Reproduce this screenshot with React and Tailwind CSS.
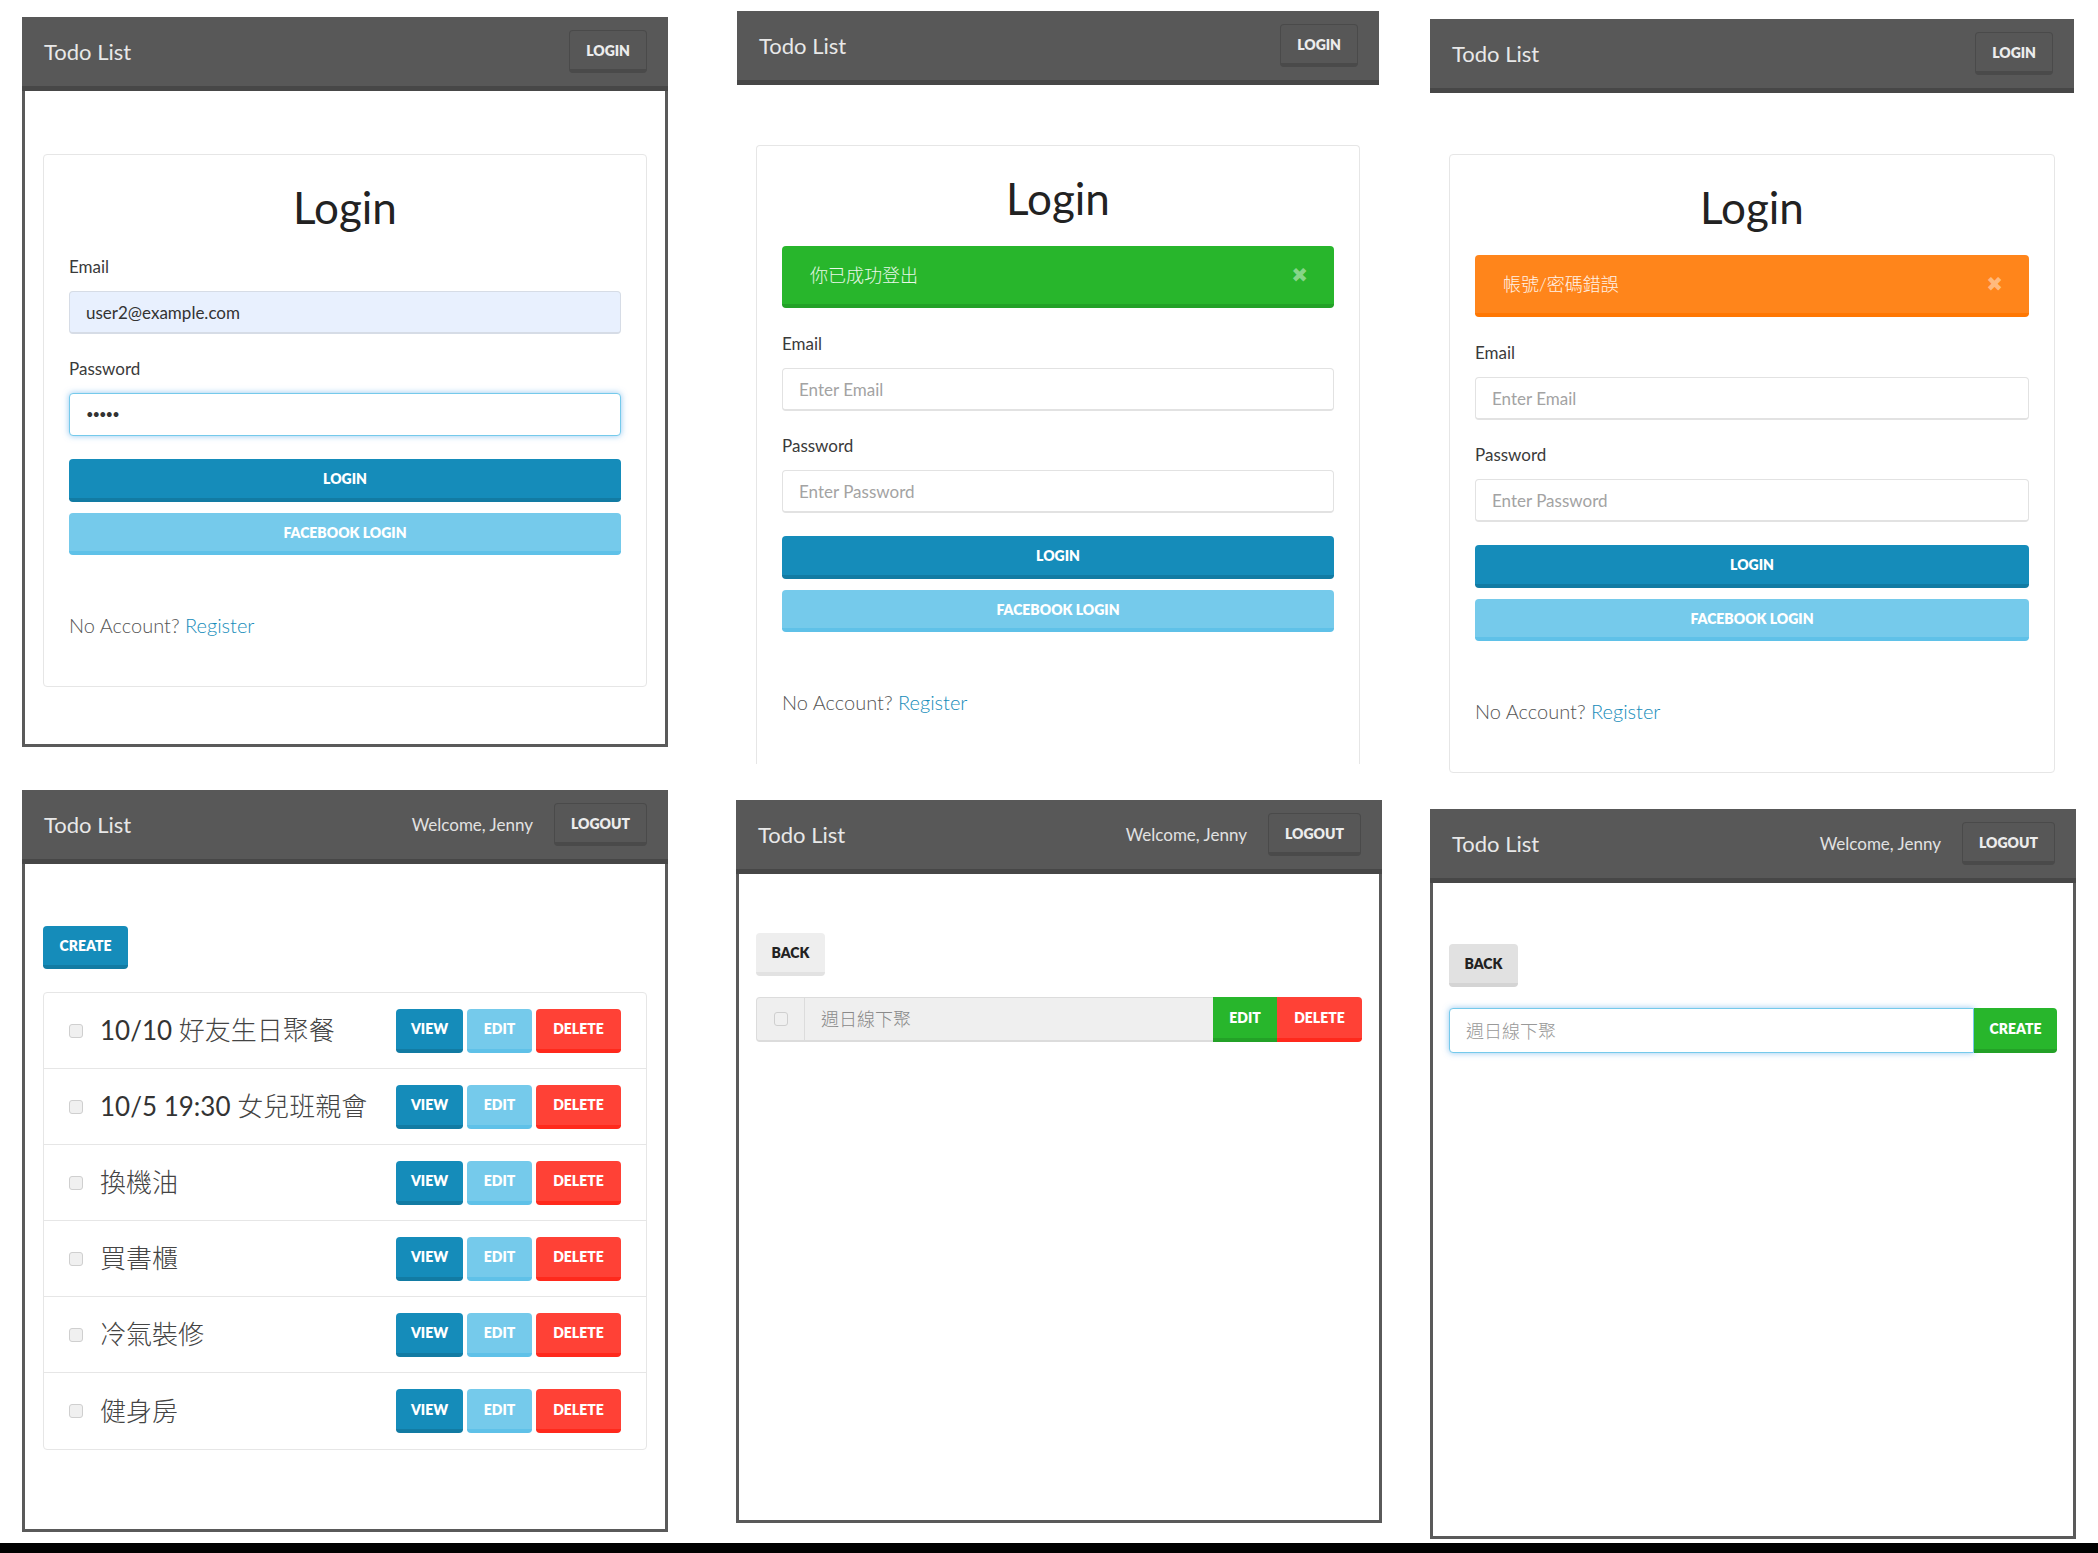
import React from "react";

const FONT = "font-['Lato','Noto_Sans_CJK_TC',sans-serif]";

const Header = ({ user }) => (
  <div className="flex h-[74px] items-center justify-between border-b-[5px] border-[#474747] bg-[#585858] pl-[22px] pr-[21px]">
    <span className="text-[22px] text-[#e8e8e8]">Todo List</span>
    <div className="flex items-center">
      {user && (
        <span className="mr-[21px] text-[17px] text-[#e2e2e2]">Welcome, {user}</span>
      )}
      <button className="h-[43px] rounded-[4px] border border-b-4 border-[#4a4a4a] bg-[#575757] px-[16px] text-[14px] font-extrabold text-[#ececec]">
        {user ? "LOGOUT" : "LOGIN"}
      </button>
    </div>
  </div>
);

const Alert = ({ kind, text }) => (
  <div
    className={
      kind === "success"
        ? "mt-[24px] flex h-[62px] items-center justify-between rounded-[4px] border-b-4 border-[#23a127] bg-[#28b62c] pl-[28px] pr-[26px]"
        : "mt-[24px] flex h-[62px] items-center justify-between rounded-[4px] border-b-4 border-[#ff7702] bg-[#ff851b] pl-[28px] pr-[26px]"
    }
  >
    <span className="text-[18px] font-light text-white/90">{text}</span>
    <span className="font-['DejaVu_Sans',sans-serif] text-[20px] leading-none text-white/45">✖</span>
  </div>
);

const Field = ({ label, value, placeholder, focused, password, first }) => (
  <>
    <label
      className={
        first
          ? "mt-[24px] block text-[17px] leading-[24px] text-[#3a3a3a]"
          : "mt-[23px] block text-[17px] leading-[24px] text-[#3a3a3a]"
      }
    >
      {label}
    </label>
    {password && focused ? (
      <div className="mt-[12px] flex h-[43px] items-center rounded-[4px] border border-[#75caeb] bg-white px-[16px] text-[13px] leading-none tracking-[-1px] text-[#333] shadow-[0_0_6px_rgba(102,175,233,0.7)]">
        •••••
      </div>
    ) : (
      <input
        readOnly
        value={value || ""}
        placeholder={placeholder}
        className={
          value
            ? "mt-[12px] block h-[43px] w-full rounded-[4px] border border-b-2 border-[#d6dce6] bg-[#e8f0fe] px-[16px] text-[17px] text-[#333] outline-none"
            : "mt-[12px] block h-[43px] w-full rounded-[4px] border border-b-2 border-[#e2e2e2] bg-white px-[16px] text-[17px] text-[#333] outline-none placeholder:text-[#a3a3a3]"
        }
      />
    )}
  </>
);

const LoginCard = ({ alert, filled, open }) => (
  <div
    className={
      open
        ? "rounded-t-[4px] border border-b-0 border-[#e6e6e6] px-[25px] pt-[28px] pb-[48px]"
        : "rounded-[4px] border border-[#e6e6e6] px-[25px] pt-[28px] pb-[47px]"
    }
  >
    <h1 className="text-center text-[44px] leading-[48px] text-[#222]">Login</h1>
    {alert}
    <Field
      first
      label="Email"
      value={filled ? "user2@example.com" : ""}
      placeholder="Enter Email"
    />
    <Field label="Password" placeholder="Enter Password" password focused={filled} />
    <button className="mt-[23px] block h-[43px] w-full rounded-[4px] border-b-4 border-[#127ba3] bg-[#158cba] text-[14px] font-extrabold text-white">
      LOGIN
    </button>
    <button className="mt-[11px] block h-[42px] w-full rounded-[4px] border-b-4 border-[#5fc1e8] bg-[#75caeb] text-[14px] font-extrabold text-white">
      FACEBOOK LOGIN
    </button>
    <p className="mt-[56px] text-[20px] font-light leading-[28px] text-[#555]">
      No Account? <span className="text-[#158cba]">Register</span>
    </p>
  </div>
);

const Checkbox = () => (
  <div className="h-[14px] w-[14px] shrink-0 rounded-[3px] border border-[#cfcfcf] bg-[#f0f0f0]" />
);

const todos = [
  { lead: "10/10 ", cjk: "好友生日聚餐" },
  { lead: "10/5 19:30 ", cjk: "女兒班親會" },
  { lead: "", cjk: "換機油" },
  { lead: "", cjk: "買書櫃" },
  { lead: "", cjk: "冷氣裝修" },
  { lead: "", cjk: "健身房" },
];

const TodoRow = ({ lead, cjk }) => (
  <div className="flex h-[76px] items-center border-b border-[#e6e6e6] px-[25px] last:border-b-0">
    <Checkbox />
    <span className="ml-[17px] flex-1 text-[26px] text-[#333]">
      {lead}
      <span className="font-light text-[#444]">{cjk}</span>
    </span>
    <div className="flex gap-[4px]">
      <button className="h-[44px] w-[67px] rounded-[4px] border-b-4 border-[#127ba3] bg-[#158cba] text-[14px] font-extrabold text-white">
        VIEW
      </button>
      <button className="h-[44px] w-[65px] rounded-[4px] border-b-4 border-[#5fc1e8] bg-[#75caeb] text-[14px] font-extrabold text-white">
        EDIT
      </button>
      <button className="h-[44px] w-[85px] rounded-[4px] border-b-4 border-[#ff291c] bg-[#ff4136] text-[14px] font-extrabold text-white">
        DELETE
      </button>
    </div>
  </div>
);

export default function App() {
  return (
    <div className={`flex h-[1553px] w-[2098px] flex-col bg-white ${FONT}`}>
      {/* top row: login screens */}
      <div className="flex h-[780px] items-start">
        <div className="ml-[22px] mt-[17px] w-[646px]">
          <Header />
          <div className="h-[656px] border-x-[3px] border-b-[3px] border-[#5a5a5a] px-[18px] pt-[63px]">
            <LoginCard filled />
          </div>
        </div>

        <div className="ml-[69px] mt-[11px] w-[642px]">
          <Header />
          <div className="px-[19px] pt-[60px]">
            <LoginCard open alert={<Alert kind="success" text="你已成功登出" />} />
          </div>
        </div>

        <div className="ml-[51px] mt-[19px] w-[644px]">
          <Header />
          <div className="px-[19px] pt-[61px]">
            <LoginCard alert={<Alert kind="warning" text="帳號/密碼錯誤" />} />
          </div>
        </div>
      </div>

      {/* bottom row: todo screens */}
      <div className="flex items-start">
        <div className="ml-[22px] mt-[10px] w-[646px]">
          <Header user="Jenny" />
          <div className="h-[668px] border-x-[3px] border-b-[3px] border-[#5a5a5a] px-[18px] pt-[62px]">
            <button className="h-[43px] w-[85px] rounded-[4px] border-b-4 border-[#127ba3] bg-[#158cba] text-[14px] font-extrabold text-white">
              CREATE
            </button>
            <div className="mt-[23px] rounded-[4px] border border-[#e6e6e6]">
              {todos.map((t) => (
                <TodoRow key={t.cjk} lead={t.lead} cjk={t.cjk} />
              ))}
            </div>
          </div>
        </div>

        <div className="ml-[68px] mt-[20px] w-[646px]">
          <Header user="Jenny" />
          <div className="h-[649px] border-x-[3px] border-b-[3px] border-[#5a5a5a] px-[17px] pt-[59px]">
            <button className="h-[43px] w-[69px] rounded-[4px] border-b-4 border-[#e2e2e2] bg-[#eeeeee] text-[14px] font-extrabold text-[#222]">
              BACK
            </button>
            <div className="mt-[21px] flex h-[45px]">
              <div className="flex w-[49px] shrink-0 items-center justify-center rounded-l-[4px] border border-b-2 border-[#dcdcdc] bg-[#efefef]">
                <Checkbox />
              </div>
              <div className="flex min-w-0 flex-1 items-center border-y border-b-2 border-[#dcdcdc] bg-[#efefef] pl-[16px] text-[18px] font-light text-[#8a8a8a]">
                週日線下聚
              </div>
              <button className="h-full w-[64px] shrink-0 border-b-4 border-[#23a127] bg-[#28b62c] text-[14px] font-extrabold text-white">
                EDIT
              </button>
              <button className="h-full w-[85px] shrink-0 rounded-r-[4px] border-b-4 border-[#ff291c] bg-[#ff4136] text-[14px] font-extrabold text-white">
                DELETE
              </button>
            </div>
          </div>
        </div>

        <div className="ml-[48px] mt-[29px] w-[646px]">
          <Header user="Jenny" />
          <div className="h-[656px] border-x-[3px] border-b-[3px] border-[#5a5a5a] px-[16px] pt-[61px]">
            <button className="h-[43px] w-[69px] rounded-[4px] border-b-4 border-[#d4d4d4] bg-[#e1e1e1] text-[14px] font-extrabold text-[#222]">
              BACK
            </button>
            <div className="mt-[21px] flex h-[45px]">
              <input
                readOnly
                placeholder="週日線下聚"
                className="h-full min-w-0 flex-1 rounded-l-[4px] border border-[#75caeb] bg-white px-[16px] text-[18px] font-light outline-none shadow-[0_0_6px_rgba(102,175,233,0.7)] placeholder:text-[#999]"
              />
              <button className="h-full w-[83px] shrink-0 rounded-r-[4px] border-b-4 border-[#23a127] bg-[#28b62c] text-[14px] font-extrabold text-white">
                CREATE
              </button>
            </div>
          </div>
        </div>
      </div>

      <div className="mt-auto h-[10px] bg-black" />
    </div>
  );
}
